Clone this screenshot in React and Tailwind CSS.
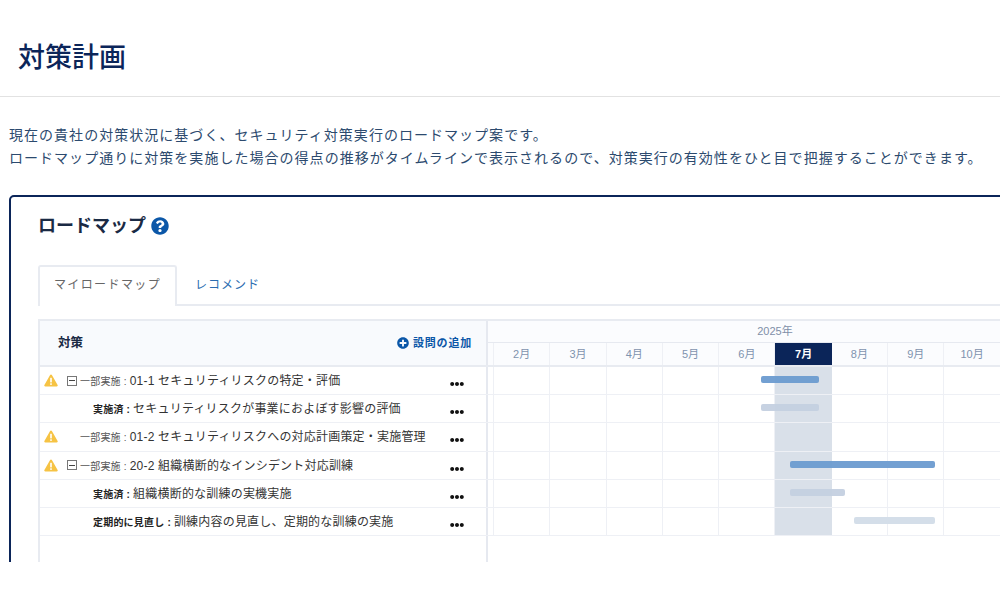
import React from "react"
import { FaQuestionCircle, FaPlusCircle, FaEllipsisH } from "react-icons/fa"

const months = ["2月", "3月", "4月", "5月", "6月", "7月", "8月", "9月", "10月"]

const rows = [
  { warn: true, toggle: true, status: "一部実施", title: "01-1 セキュリティリスクの特定・評価", bar: "left-[273px] w-[58px] bg-[#6c9bd0]" },
  { status: "実施済", title: "セキュリティリスクが事業におよぼす影響の評価", bar: "left-[273px] w-[58px] bg-[#c4d0e0]", child: true },
  { warn: true, status: "一部実施", title: "01-2 セキュリティリスクへの対応計画策定・実施管理" },
  { warn: true, toggle: true, status: "一部実施", title: "20-2 組織横断的なインシデント対応訓練", bar: "left-[302px] w-[145px] bg-[#6c9bd0]" },
  { status: "実施済", title: "組織横断的な訓練の実機実施", bar: "left-[302px] w-[55px] bg-[#c4d0e0]", child: true },
  { status: "定期的に見直し", title: "訓練内容の見直し、定期的な訓練の実施", bar: "left-[366px] w-[81px] bg-[#d2dce8]", child: true },
]

const WarnIcon = () => (
  <svg width="14" height="13" viewBox="0 0 14 13" className="shrink-0">
    <path d="M7 .6c.4 0 .7.2.9.5l5.7 10c.4.7-.1 1.5-.9 1.5H1.3c-.8 0-1.3-.8-.9-1.5l5.7-10c.2-.3.5-.5.9-.5z" fill="#f6c344" />
    <rect x="6.2" y="3.8" width="1.6" height="4.6" fill="#fff" />
    <rect x="6.2" y="9.3" width="1.6" height="1.6" fill="#fff" />
  </svg>
)

const Row = ({ row }) => (
  <div className="flex h-[28.2px] border-b border-[#eef0f5]">
    <div className="w-[448px] shrink-0 flex items-center border-r-2 border-[#e6e9f0] text-[#333]">
      <div className="w-[27px] shrink-0 pl-[4px]">{row.warn && <WarnIcon />}</div>
      <div className="w-[13px] shrink-0">
        {row.toggle && (
          <div className="w-[10px] h-[10px] border border-[#777] flex items-center justify-center">
            <div className="w-[6px] h-px bg-[#444]" />
          </div>
        )}
      </div>
      {row.child ? (
        <span className="ml-[13px] w-[346px] text-[12px] tracking-[0.2px] whitespace-nowrap mt-[1px]">
          <b className="text-[10px] text-[#222]">{row.status} : </b>
          {row.title}
        </span>
      ) : (
        <span className="w-[359px] text-[12px] tracking-[0.2px] whitespace-nowrap mt-[1px]">
          <span className="text-[10px] text-[#555]">{row.status} : </span>
          {row.title}
        </span>
      )}
      <FaEllipsisH className="ml-[11px] mt-[7px] text-[14px] text-[#111]" />
    </div>
    <div className="relative flex-1 flex">
      <div className="w-[6px] shrink-0 border-r border-[#eef0f5]" />
      {months.map((m) => (
        <div
          key={m}
          className={m === "7月" ? "w-[56.3px] shrink-0 bg-[#d9e0e9]" : "w-[56.3px] shrink-0 border-r border-[#eef0f5]"}
        />
      ))}
      {row.bar && <div className={`absolute top-[9px] h-[7px] rounded-[2px] opacity-95 ${row.bar}`} />}
    </div>
  </div>
)

export default function App() {
  return (
    <div className="h-[593px] overflow-hidden bg-white font-['Liberation_Sans','Noto_Sans_CJK_JP',sans-serif]">
      <div className="h-[562px] overflow-hidden">
        <div className="h-[97px] border-b border-[#e2e2e2] flex items-center pl-[18px] pt-[20px]">
          <h1 className="text-[27px] font-medium text-[#0b2559]">対策計画</h1>
        </div>

        <div className="pl-[9px] pt-[27px] text-[14px] leading-[23px] tracking-[1.03px] text-[#2c4a6e] whitespace-nowrap">
          <p>現在の貴社の対策状況に基づく、セキュリティ対策実行のロードマップ案です。</p>
          <p>ロードマップ通りに対策を実施した場合の得点の推移がタイムラインで表示されるので、対策実行の有効性をひと目で把握することができます。</p>
        </div>

        <div className="ml-[9px] mt-[25px] w-[1200px] h-[400px] border-2 border-[#0b2559] rounded-[5px] pl-[27px] pt-[16px]">
          <div className="flex items-center gap-[5px] h-[26px] mb-[26px]">
            <h2 className="text-[18px] font-bold text-[#1a2a44]">ロードマップ</h2>
            <FaQuestionCircle className="text-[18px] text-[#0b57a8]" />
          </div>

          <div className="flex h-[41px] border-b-2 border-[#e8ebf1] mb-[13px] w-[1160px]">
            <div className="w-[139px] h-[41px] pb-[3px] bg-white border-2 border-b-0 border-[#e8ebf1] rounded-t-[3px] flex items-center justify-center text-[12px] tracking-[1.4px] text-[#666]">
              マイロードマップ
            </div>
            <div className="pl-[18px] flex items-center text-[12px] tracking-[1px] text-[#2a6cb0]">
              レコメンド
            </div>
          </div>

          <div className="border-l-2 border-t-2 border-[#e8ebf1] w-[1160px] h-[300px]">
            <div className="flex h-[46px] border-b-2 border-[#e8ebf1]">
              <div className="w-[448px] shrink-0 bg-[#f8fafd] border-r-2 border-[#e6e9f0] flex items-center justify-between pl-[18px] pr-[14px]">
                <span className="text-[12.5px] font-bold text-[#1a2a44]">対策</span>
                <span className="flex items-center gap-[4px] text-[11px] tracking-[0.8px] font-bold text-[#0b57a8]">
                  <FaPlusCircle className="text-[12px]" />
                  設問の追加
                </span>
              </div>
              <div className="flex-1 flex flex-col">
                <div className="h-[22px] bg-[#fbfcfe] border-b border-[#e6e9f0] w-[574px] text-center text-[11px] leading-[21px] text-[#7f8fa8]">
                  2025年
                </div>
                <div className="flex-1 flex bg-[#fbfcfe] border-t border-[#e6e9f0] -mt-px">
                  <div className="w-[6px] shrink-0 border-r border-[#eef0f5]" />
                  {months.map((m) =>
                    m === "7月" ? (
                      <div key={m} className="w-[56.3px] shrink-0 bg-[#0b2559] text-white font-bold text-[11px] flex items-center justify-center">
                        {m}
                      </div>
                    ) : (
                      <div key={m} className="w-[56.3px] shrink-0 border-r border-[#eef0f5] text-[#7f93ae] text-[11px] flex items-center justify-center">
                        {m}
                      </div>
                    )
                  )}
                </div>
              </div>
            </div>

            {rows.map((row) => (
              <Row key={row.title} row={row} />
            ))}

            <div className="w-[448px] h-[60px] border-r-2 border-[#e6e9f0]" />
          </div>
        </div>
      </div>
    </div>
  )
}
